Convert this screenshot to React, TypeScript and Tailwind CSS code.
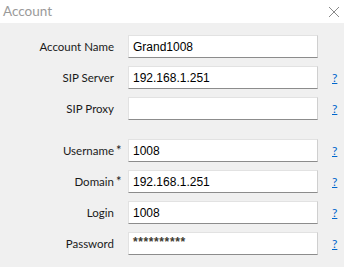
import React from 'react';

type Field = {
  label: string;
  value: string;
  required?: boolean;
  help?: boolean;
};

const groupA: Field[] = [
  { label: 'Account Name', value: 'Grand1008' },
  { label: 'SIP Server', value: '192.168.1.251', help: true },
  { label: 'SIP Proxy', value: '', help: true },
];

const groupB: Field[] = [
  { label: 'Username', value: '1008', required: true, help: true },
  { label: 'Domain', value: '192.168.1.251', required: true, help: true },
  { label: 'Login', value: '1008', help: true },
  { label: 'Password', value: '**********', help: true },
];

const Row: React.FC<{ field: Field }> = ({ field }) => (
  <div className="flex items-center h-[23px]">
    <div className="relative w-[114px] text-right text-[11.5px] text-[#1a1a1a] leading-none">
      {field.label}
      {field.required && (
        <span className="absolute left-full ml-[2px] top-[-1px] text-[13px]">*</span>
      )}
    </div>
    <div className="ml-[14px] w-[190px] h-[23px] bg-white border border-[#e2e2e2] border-r-[#cfcfcf] border-b-[#8c8c8c] flex items-center px-[4px] text-[12px] text-black font-['Liberation_Sans',sans-serif]">
      {field.label === 'Password' ? (
        <span className="text-[#3d3a30] tracking-[0.6px] text-[12px] font-bold pb-[3px]">{field.value}</span>
      ) : (
        field.value
      )}
    </div>
    {field.help && (
      <a className="ml-[14px] text-[12px] text-[#0066cc] underline leading-none cursor-pointer">?</a>
    )}
  </div>
);

export default function App() {
  return (
    <div className="w-[344px] h-[267px] bg-[#f0f0f0] font-['Lato',sans-serif] overflow-hidden">
      <header className="h-[23px] bg-white flex items-center justify-between pl-[3px] pr-[3px]">
        <span className="text-[13.5px] text-[#9a9a9a] leading-none">Account</span>
        <svg width="12" height="12" viewBox="0 0 12 12" className="mr-[1px]">
          <path d="M1 1 L11 11 M11 1 L1 11" stroke="#8a8a8a" strokeWidth="1" fill="none" />
        </svg>
      </header>
      <div className="pt-[12px] flex flex-col gap-[8px]">
        {groupA.map(f => (
          <Row key={f.label} field={f} />
        ))}
      </div>
      <div className="pt-[19px] flex flex-col gap-[8px]">
        {groupB.map(f => (
          <Row key={f.label} field={f} />
        ))}
      </div>
    </div>
  );
}
